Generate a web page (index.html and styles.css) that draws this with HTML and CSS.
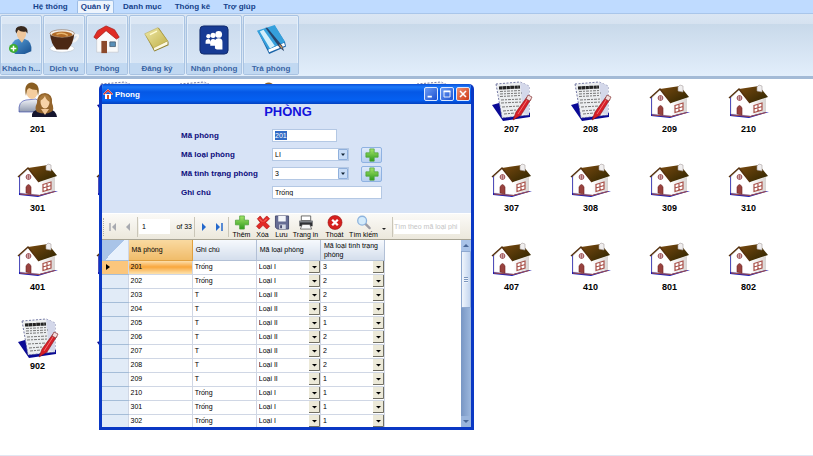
FILE: index.html
```html
<!DOCTYPE html>
<html lang="vi">
<head>
<meta charset="utf-8">
<title>Phong</title>
<link rel="stylesheet" href="styles.css">
</head>
<body>
<svg class="defs" aria-hidden="true">
  <defs>
    <linearGradient id="roof" x1="0" y1="0" x2="1" y2="1"><stop offset="0" stop-color="#7a4a10"/><stop offset="1" stop-color="#2c2400"/></linearGradient>
    <linearGradient id="wall" x1="0" y1="0" x2="1" y2="0"><stop offset="0" stop-color="#fff"/><stop offset="1" stop-color="#d8d4d2"/></linearGradient>
    <linearGradient id="green" x1="0" y1="0" x2="0" y2="1"><stop offset="0" stop-color="#a6e66a"/><stop offset="1" stop-color="#2e9a1c"/></linearGradient>
    <linearGradient id="shirt" x1="0" y1="0" x2="0" y2="1"><stop offset="0" stop-color="#f2f4f8"/><stop offset="1" stop-color="#8e98ae"/></linearGradient>
    <linearGradient id="blue" x1="0" y1="0" x2="1" y2="1"><stop offset="0" stop-color="#5aa0d8"/><stop offset="1" stop-color="#164e8e"/></linearGradient>
    <linearGradient id="gold" x1="0" y1="0" x2="1" y2="1"><stop offset="0" stop-color="#efe9a8"/><stop offset="1" stop-color="#c0b048"/></linearGradient>
  </defs>
  <symbol id="house" viewBox="0 0 40 40">
    <path d="M1 16V35L20 37 40 31 33 31Z" fill="#1c1cb4"/>
    <path d="M2 17 10 9 22 22V35L2 33Z" fill="#fff" stroke="#cfc9cc" stroke-width=".6"/>
    <path d="M21 22 37 17V31L21 35Z" fill="url(#wall)"/>
    <path d="M2 34 21 35.500 37 31.500" fill="none" stroke="#a04a48" stroke-width="1"/>
    <path d="M10 8 30 5 39 16 21 22Z" fill="url(#roof)"/>
    <path d="M0 17 10 8 21 22" fill="none" stroke="#55300c" stroke-width="1.400"/>
    <path d="M28 6 30 4 33 5V11L28 10Z" fill="#f0eeee" stroke="#a8a0a0" stroke-width=".6"/>
    <path d="M8 33V27Q10.500 22 13 27V34Z" fill="#98423e" stroke="#6e2422" stroke-width=".6"/>
    <circle cx="10.500" cy="17" r="2.400" fill="#f2dede" stroke="#984a50" stroke-width="1"/>
    <path d="M8 17H13M10.500 14.500V19.500" stroke="#984a50" stroke-width=".7"/>
    <path d="M25 24.500 33 22V29L25 31.500ZM29 23V30.500M25 28 33 25.500" fill="#fff" stroke="#a85048" stroke-width="1.200"/>
  </symbol>
  <symbol id="note" viewBox="0 0 40 40">
    <path d="M0 24 7 22 38 32V36L11 40Z" fill="#0a0a96"/>
    <path d="M4 3 28 1 37 5V34L10 37Z" fill="#eceef0" stroke="#555a90" stroke-width=".8" stroke-dasharray="2 1.500"/>
    <path d="M28 1 31 32 37 34V5Z" fill="#d4d8ea"/>
    <path d="M7 7 28 6" stroke="#222" stroke-width="3.200" stroke-dasharray="3 .4 4 .5"/>
    <path d="M8 10.500 29 9.500M8 13 30 12M8 15.500 28 14.500M9 19 30 18M9 22 30 21M10 26 28 25M11 30 24 29M12 33 23 32" stroke="#777" stroke-width="1" stroke-dasharray="3 1 2 1"/>
    <path d="M35 16 39 18 29 34 21 39 24 31Z" fill="#d81e28" stroke="#8a1010" stroke-width=".6"/>
    <path d="M36 14 40 16 38 20 34 18Z" fill="#f4dede" stroke="#843030" stroke-width=".7"/>
    <path d="M35 19 26 33" stroke="#f58a88" stroke-width=".8"/>
  </symbol>
  <symbol id="people" viewBox="0 0 40 40">
    <path d="M1 31Q0 20 8 19L18 18Q23 21 22 31Z" fill="url(#shirt)" stroke="#3040a8" stroke-width=".6"/>
    <ellipse cx="14" cy="11" rx="5.500" ry="7" fill="#f4cd9e"/>
    <path d="M8 15Q5 2 14 1.500Q23 3 20 15L19 9Q14 9 11 7L9 9Z" fill="#8a5e22"/>
    <path d="M14 36Q13 29 22 28H31Q38 29 39 36Z" fill="#15152e"/>
    <path d="M19 31Q16 28 19 22Q19 12 27 12Q35 13 34 22Q37 29 33 31Q27 34 19 31Z" fill="#93642c"/>
    <ellipse cx="27" cy="21" rx="4.500" ry="6.500" fill="#f7d3a8"/>
    <path d="M21 20Q22 12 29 14Q33 16 32 21Q28 19 27 15Q25 19 21 20Z" fill="#a9793c"/>
    <path d="M23 28 27 34 31 28Z" fill="#f0c698"/>
  </symbol>
  <symbol id="plus" viewBox="0 0 16 16"><path d="M5.500 1H10.500V5.500H15V10.500H10.500V15H5.500V10.500H1V5.500H5.500Z" fill="url(#green)" stroke="#4aa038" stroke-width=".8"/></symbol>
</svg>

<header class="ribbon">
  <nav class="menu">
    <button>Hệ thống</button>
    <button class="active">Quản lý</button>
    <button>Danh mục</button>
    <button>Thống kê</button>
    <button>Trợ giúp</button>
  </nav>
  <div class="groups">
    <button class="group"><svg viewBox="4 0 32 32"><path d="M10 28Q9 16 17 15H24Q32 17 31 28L24 31H14Z" fill="url(#blue)"/><path d="M17 14H24L21 19Z" fill="#e8c49c"/><ellipse cx="20.500" cy="9" rx="5" ry="6.500" fill="#efc79c"/><path d="M15 9Q12 2 20 1Q28 1 27 9L25 7Q20 8 17 5Z" fill="#38291e"/><circle cx="12" cy="25" r="4.800" fill="#3cae2e"/><path d="M12 22V28M9 25H15" stroke="#fff" stroke-width="1.600"/></svg><span>Khách h...</span></button>
    <button class="group"><svg viewBox="0 0 32 32"><ellipse cx="14" cy="25" rx="13" ry="4" fill="#fff" stroke="#b8c0cc" stroke-width=".6"/><path d="M26 11Q33 9 30 14Q28 18 24 18" fill="none" stroke="#f4f4f4" stroke-width="2.500"/><path d="M1 9Q2 20 8 26H20Q26 20 27 9Z" fill="#4b2814"/><ellipse cx="14" cy="9" rx="13" ry="4" fill="#f3eee8" stroke="#9c8470" stroke-width=".8"/><ellipse cx="14" cy="10" rx="11" ry="3" fill="#b06a26"/><path d="M8 10Q14 7 20 11" stroke="#e7b56e" stroke-width="1.500" fill="none"/></svg><span>Dịch vụ</span></button>
    <button class="group"><svg viewBox="1 0 32 32"><path d="M6 13 17 4 29 13V29H6Z" fill="#fafafa" stroke="#c0c4cc" stroke-width=".7"/><path d="M11 17H17V30H11Z" fill="#8c4a2c"/><path d="M20 18H26V23H20Z" fill="#5a90b8" stroke="#46586a" stroke-width=".8"/><path d="M3 13 7 6 16 1 25 5 30 13 27 15 16 6 6 15Z" fill="#e02c24" stroke="#a81c18" stroke-width=".8"/></svg><span>Phòng</span></button>
    <button class="group wide"><svg viewBox="1 0 34 32"><path d="M5 11 15 29 31 22V18L20 2Z" fill="#8e7e28"/><path d="M14 24 30 17 30 21 15 28Z" fill="#fbf8e2"/><path d="M4 9 19 2 30 17 14 25Z" fill="url(#gold)" stroke="#b6a850" stroke-width=".6"/><path d="M10 10 18 6" stroke="#fffbd0" stroke-width="1.500"/></svg><span>Đăng ký</span></button>
    <button class="group wide"><svg viewBox="0 0 32 32"><rect x="1" y="1" width="30" height="30" rx="4" fill="#173b94" stroke="#0e2869"/><g fill="#fff"><circle cx="10" cy="12" r="2.300"/><circle cx="15" cy="11" r="2.800"/><circle cx="21" cy="10" r="3.600"/><path d="M7 18Q7 15 10 15Q12 15 12 17V20H7ZM12 19Q12 15 15 15Q18 15 18 18V22H12ZM17 25V18Q17 14 21 14Q25 14 25 18V26H19Z"/></g></svg><span>Nhận phòng</span></button>
    <button class="group wide"><svg viewBox="0 0 32 32"><path d="M2 7 14 31 32 23 31 18 20 1Z" fill="#1b64a8"/><path d="M13 26 30 19 31 22 14 29Z" fill="#fff"/><path d="M1 6 20 0 31 18 13 26Z" fill="#35a0dc"/><path d="M4 7 8 5 20 22 15 25Z" fill="#d3effb"/><path d="M10 3 12 3 28 22 30 28 25 24Z" fill="#28456c"/><path d="M25 21 28 25" stroke="#c58a50" stroke-width="1.500"/></svg><span>Trả phòng</span></button>
  </div>
</header>

<main class="desktop">
  <div class="tiles">
    <figure><svg><use href="#people"/></svg><figcaption>201</figcaption></figure>
    <figure><svg><use href="#note"/></svg></figure>
    <figure><svg><use href="#note"/></svg></figure>
    <figure><svg><use href="#people"/></svg></figure>
    <figure><svg><use href="#house"/></svg></figure>
    <figure><svg><use href="#note"/></svg></figure>
    <figure><svg><use href="#note"/></svg><figcaption>207</figcaption></figure>
    <figure><svg><use href="#note"/></svg><figcaption>208</figcaption></figure>
    <figure><svg><use href="#house"/></svg><figcaption>209</figcaption></figure>
    <figure><svg><use href="#house"/></svg><figcaption>210</figcaption></figure>

    <figure><svg><use href="#house"/></svg><figcaption>301</figcaption></figure>
    <figure><svg><use href="#house"/></svg></figure>
    <figure><svg><use href="#house"/></svg></figure>
    <figure><svg><use href="#house"/></svg></figure>
    <figure><svg><use href="#house"/></svg></figure>
    <figure><svg><use href="#house"/></svg></figure>
    <figure><svg><use href="#house"/></svg><figcaption>307</figcaption></figure>
    <figure><svg><use href="#house"/></svg><figcaption>308</figcaption></figure>
    <figure><svg><use href="#house"/></svg><figcaption>309</figcaption></figure>
    <figure><svg><use href="#house"/></svg><figcaption>310</figcaption></figure>

    <figure><svg><use href="#house"/></svg><figcaption>401</figcaption></figure>
    <figure><svg><use href="#house"/></svg></figure>
    <figure><svg><use href="#house"/></svg></figure>
    <figure><svg><use href="#house"/></svg></figure>
    <figure><svg><use href="#house"/></svg></figure>
    <figure><svg><use href="#house"/></svg></figure>
    <figure><svg><use href="#house"/></svg><figcaption>407</figcaption></figure>
    <figure><svg><use href="#house"/></svg><figcaption>410</figcaption></figure>
    <figure><svg><use href="#house"/></svg><figcaption>801</figcaption></figure>
    <figure><svg><use href="#house"/></svg><figcaption>802</figcaption></figure>

    <figure><svg><use href="#note"/></svg><figcaption>902</figcaption></figure>
    <figure><svg><use href="#note"/></svg></figure>
  </div>

  <section class="window">
    <div class="titlebar">
      <svg viewBox="0 0 10 10"><path d="M2 5H8V10H2Z" fill="#fff"/><path d="M0 5 5 0 10 5 9 6 5 2.500 1 6Z" fill="#e8331e" stroke="#fff" stroke-width=".4"/><path d="M4 6H6V10H4Z" fill="#d2502c"/></svg>
      <h1>Phong</h1>
      <button class="ctl" aria-label="Minimize"><svg viewBox="0 0 14 14"><path d="M3 10H8" stroke="#fff" stroke-width="2"/></svg></button>
      <button class="ctl" aria-label="Maximize"><svg viewBox="0 0 14 14"><path d="M3.500 4V10.500H10.500V4Z" fill="none" stroke="#fff"/><path d="M3 4H11" stroke="#fff" stroke-width="2"/></svg></button>
      <button class="ctl close" aria-label="Close"><svg viewBox="0 0 14 14"><path d="M3.500 3.500 10.500 10.500M10.500 3.500 3.500 10.500" stroke="#fff" stroke-width="1.800"/></svg></button>
    </div>

    <form class="form">
      <h2>PHÒNG</h2>
      <div class="fields">
        <label for="room">Mã phòng</label>
        <div class="control"><input id="room" class="short" value="201"></div>
        <label for="type">Mã loại phòng</label>
        <div class="control">
          <select id="type"><option>LI</option></select>
          <button type="button" class="add" aria-label="+"><svg><use href="#plus"/></svg></button>
        </div>
        <label for="state">Mã tình trạng phòng</label>
        <div class="control">
          <select id="state"><option>3</option></select>
          <button type="button" class="add" aria-label="+"><svg><use href="#plus"/></svg></button>
        </div>
        <label for="memo">Ghi chú</label>
        <div class="control"><input id="memo" class="long" value="Trống"></div>
      </div>
    </form>

    <div class="toolbar">
      <i class="grip"></i>
      <button class="nav"><svg viewBox="0 0 10 10"><path d="M2 1V9" stroke="#a8aab0" stroke-width="1.500"/><path d="M8 1V9L4 5Z" fill="#a8aab0"/></svg></button>
      <button class="nav"><svg viewBox="0 0 10 10"><path d="M7 1V9L3 5Z" fill="#a8aab0"/></svg></button>
      <i class="sep"></i>
      <input class="page" aria-label="1" value="1">
      <span class="count">of 33</span>
      <i class="sep"></i>
      <button class="nav"><svg viewBox="0 0 10 10"><path d="M3 1V9L7 5Z" fill="#2468cc"/></svg></button>
      <button class="nav"><svg viewBox="0 0 10 10"><path d="M2 1V9L6 5Z" fill="#2468cc"/><path d="M8 1V9" stroke="#2468cc" stroke-width="1.500"/></svg></button>
      <i class="sep"></i>
      <button class="tool"><svg><use href="#plus"/></svg>Thêm</button>
      <button class="tool slim"><svg viewBox="0 0 16 16"><path d="M2 4 5 1 8 5 12 1 15 4 11 8 15 12 12 15 8 11 4 15 1 12 5 8Z" fill="#e22a26" stroke="#a81414" stroke-width=".7"/><path d="M4 4 7 7M12 4 9 7" stroke="#ff8a80"/></svg>Xóa</button>
      <button class="tool slim"><svg viewBox="0 0 16 16"><path d="M1 1H15V15H3L1 13Z" fill="#666c94" stroke="#484c70"/><path d="M4 1H12V7H4Z" fill="#f4f6fa"/><path d="M5 10H12V15H5Z" fill="#d4d8e4"/><path d="M6 11H8V14H6Z" fill="#484c70"/></svg>Lưu</button>
      <button class="tool wide"><svg viewBox="0 0 16 16"><path d="M3 1H13V6H3Z" fill="#fff" stroke="#555" stroke-width=".9"/><path d="M1 6H15V12H1Z" fill="#2c2e32"/><path d="M1 6H15V8H1Z" fill="#7c8086"/><path d="M4 10H12L14 15H2Z" fill="#f6f6f6" stroke="#555" stroke-width=".8"/></svg>Trang in</button>
      <button class="tool wide"><svg viewBox="0 0 16 16"><circle cx="8" cy="8" r="7.500" fill="#d5201e" stroke="#961010" stroke-width=".6"/><path d="M5 5 11 11M11 5 5 11" stroke="#fff" stroke-width="2.400"/></svg>Thoát</button>
      <button class="tool wide"><svg viewBox="0 0 16 16"><path d="M9 9 14 14" stroke="#9c9ca4" stroke-width="2.500" stroke-linecap="round"/><circle cx="6" cy="6" r="4.700" fill="#d4ebfb" stroke="#8eb4de" stroke-width="1.400"/></svg>Tìm kiếm</button>
      <i class="caret"></i>
      <i class="sep"></i>
      <input class="search" aria-label="Tìm theo mã loại phòng" placeholder="Tìm theo mã loại phi">
    </div>

    <div class="sheet">
      <table>
        <colgroup><col class="c0"><col><col><col><col></colgroup>
        <thead><tr><td class="corner"></td><th class="picked">Mã phòng</th><th>Ghi chú</th><th>Mã loại phòng</th><th>Mã loại tình trạng phòng</th></tr></thead>
        <tbody>
          <tr class="current"><td></td><td>201</td><td>Trống</td><td><select aria-label="Mã loại phòng"><option>Loại I</option></select></td><td><select aria-label="Mã loại tình trạng phòng"><option>3</option></select></td></tr>
          <tr><td></td><td>202</td><td>Trống</td><td><select aria-label="Mã loại phòng"><option>Loại I</option></select></td><td><select aria-label="Mã loại tình trạng phòng"><option>2</option></select></td></tr>
          <tr><td></td><td>203</td><td>T</td><td><select aria-label="Mã loại phòng"><option>Loại II</option></select></td><td><select aria-label="Mã loại tình trạng phòng"><option>2</option></select></td></tr>
          <tr><td></td><td>204</td><td>T</td><td><select aria-label="Mã loại phòng"><option>Loại II</option></select></td><td><select aria-label="Mã loại tình trạng phòng"><option>3</option></select></td></tr>
          <tr><td></td><td>205</td><td>T</td><td><select aria-label="Mã loại phòng"><option>Loại II</option></select></td><td><select aria-label="Mã loại tình trạng phòng"><option>1</option></select></td></tr>
          <tr><td></td><td>206</td><td>T</td><td><select aria-label="Mã loại phòng"><option>Loại II</option></select></td><td><select aria-label="Mã loại tình trạng phòng"><option>2</option></select></td></tr>
          <tr><td></td><td>207</td><td>T</td><td><select aria-label="Mã loại phòng"><option>Loại II</option></select></td><td><select aria-label="Mã loại tình trạng phòng"><option>2</option></select></td></tr>
          <tr><td></td><td>208</td><td>T</td><td><select aria-label="Mã loại phòng"><option>Loại II</option></select></td><td><select aria-label="Mã loại tình trạng phòng"><option>2</option></select></td></tr>
          <tr><td></td><td>209</td><td>T</td><td><select aria-label="Mã loại phòng"><option>Loại II</option></select></td><td><select aria-label="Mã loại tình trạng phòng"><option>1</option></select></td></tr>
          <tr><td></td><td>210</td><td>Trống</td><td><select aria-label="Mã loại phòng"><option>Loại I</option></select></td><td><select aria-label="Mã loại tình trạng phòng"><option>1</option></select></td></tr>
          <tr><td></td><td>301</td><td>Trống</td><td><select aria-label="Mã loại phòng"><option>Loại I</option></select></td><td><select aria-label="Mã loại tình trạng phòng"><option>1</option></select></td></tr>
          <tr><td></td><td>302</td><td>Trống</td><td><select aria-label="Mã loại phòng"><option>Loại I</option></select></td><td><select aria-label="Mã loại tình trạng phòng"><option>1</option></select></td></tr>
        </tbody>
      </table>
      <div class="scroll"><i class="up"></i><i class="thumb"></i><i class="down"></i></div>
    </div>
  </section>
</main>
</body>
</html>
```

FILE: styles.css
```css
* { box-sizing: border-box; }

body {
  margin: 0;
  min-height: 100vh;
  display: flex;
  flex-direction: column;
  overflow: hidden;
  background: #fff;
  border-bottom: 1px solid #e2e6f2;
  font: 8px "Liberation Sans", Arial, sans-serif;
  color: #000;
}

button, input, select { font: inherit; color: inherit; margin: 0; padding: 0; border: 0; background: none; border-radius: 0; }
select { appearance: none; }
.defs { position: absolute; width: 0; height: 0; }

/* Ribbon */
.ribbon { border-bottom: 3px solid #a3bad6; background: #cfdff2; }
.menu { display: flex; gap: 5px; height: 14px; padding-left: 29px; background: #bfdbff; border-bottom: 1px solid #a9c6ea; }
.menu button { padding: 0 4px; color: #15428b; font-weight: bold; line-height: 12px; }
.menu .active { background: #edf4fd; border: 1px solid #9dbde6; border-bottom: 0; border-radius: 2px 2px 0 0; padding: 0 3px; }
.groups { display: flex; gap: 1px; height: 62px; padding: 1px 0; background: linear-gradient(#dbe6f3 0, #d6e2f0 10px, #c8d9ea 10px, #e2eefb); }
.group {
  display: flex; flex-direction: column; align-items: center; justify-content: space-between;
  width: 42px; padding-top: 8px;
  border: 1px solid #a9c3e2; border-radius: 2px;
  background: linear-gradient(#dce7f4 0 8px, #ccdcee 8px, #dbe8f7);
  box-shadow: inset 0 0 0 1px #e4effa;
  color: #3a64a4; font-weight: bold;
}
.group.wide { width: 56px; }
.group svg { width: 30px; height: 32px; }
.group span { width: 100%; background: #c1d8f1; line-height: 11px; text-align: center; white-space: nowrap; }

/* Room tiles */
.desktop { position: relative; flex: 1; }
.tiles { display: grid; grid-template-columns: repeat(10, 75px); grid-auto-rows: 75px; gap: 4px; padding-top: 2px; }
figure { margin: 0; display: flex; flex-direction: column; align-items: center; gap: 3px; }
figure svg { width: 42px; height: 40px; }
figcaption { font-size: 9px; font-weight: bold; line-height: 11px; }

/* Window */
.window {
  position: absolute; left: 99px; top: 5px; width: 375px;
  border: 3px solid #0a38c4; border-top: 0; border-radius: 5px 5px 0 0;
  background: #d7e3f6; overflow: hidden;
}
.titlebar {
  display: flex; align-items: center; gap: 2px; height: 20px; margin: 0 -3px; padding: 0 4px;
  background: linear-gradient(#0a4fd8, #1c78f8 3px, #0558e6 8px, #0560f2 16px, #0340c0);
  color: #fff;
}
.titlebar > svg { width: 10px; height: 10px; }
.titlebar h1 { flex: 1; margin: 0; font-size: 8px; }
.ctl { width: 14px; height: 14px; border: 1px solid #dce8ff; border-radius: 2px; background: linear-gradient(135deg, #6c9cf4, #1c50d0); display: flex; }
.ctl.close { background: linear-gradient(135deg, #f09070, #cc3814); }
.ctl svg { width: 100%; height: 100%; }

.form { padding: 0 0 11px 79px; }
.form h2 { margin: 0 76px 0 0; font-size: 13px; line-height: 16px; height: 22px; text-align: center; color: #1212dc; }
.fields { display: grid; grid-template-columns: 91px 1fr; grid-auto-rows: 19px; align-items: center; }
.fields label { color: #0c0c7c; font-weight: bold; }
.control { display: flex; align-items: center; gap: 12px; font-size: 7px; }
.control input, .control select { height: 13px; border: 1px solid #b4c8e4; background: #fff; padding: 0 2px; }
.control .short { width: 65px; background: linear-gradient(#316ac5, #316ac5) 2px 1px / 12px 9px no-repeat #fff; color: #fff; }
.control .long { width: 110px; }
.control select {
  width: 77px;
  background:
    url("data:image/svg+xml,%3Csvg xmlns='http://www.w3.org/2000/svg' viewBox='0 0 10 11'%3E%3Cpath d='M.5.5H9.500V10.500H.5Z' fill='%23c8dcf6' stroke='%2390b0dc'/%3E%3Cpath d='M3 4.500H7L5 7Z' fill='%23123'/%3E%3C/svg%3E") right center / 10px 11px no-repeat #fff;
}
.add { width: 21px; height: 16px; border: 1px solid #8fb2e2; border-radius: 2px; background: linear-gradient(#dfeafa, #b9d0f0); display: grid; place-items: center; }
.add svg { width: 16px; height: 14px; }

/* Record toolbar */
.toolbar { display: flex; align-items: center; height: 27px; border-top: 1px solid #fff; border-bottom: 1px solid #a8a494; background: linear-gradient(#fbfaf7, #ece8dc); white-space: nowrap; font-size: 7px; }
.grip { width: 1px; height: 18px; margin: 0 1px; border-left: 1px dotted #b0ac9c; }
.nav { width: 15px; display: grid; place-items: center; }
.nav svg { width: 10px; height: 10px; }
.sep { width: 1px; height: 20px; background: #cac6b8; margin: 0 1px 0 2px; }
.page { width: 31px; height: 15px; background: #fff; padding: 0 3px; }
.count { width: 22px; text-align: right; }
.tool { width: 23px; display: flex; flex-direction: column; align-items: center; line-height: 9px; }
.tool svg { width: 16px; height: 15px; }
.tool.slim { width: 19px; }
.tool.wide { width: 29px; }
.caret { border: 2px solid transparent; border-top-color: #222; margin: 6px 4px 0; }
.search { flex: 1; min-width: 0; height: 14px; margin-right: 11px; background: #fff; padding: 0; }
.search::placeholder { color: #c4c4c4; }

/* Grid */
.sheet { display: flex; justify-content: space-between; height: 187px; overflow: hidden; background: #fff; }
table { width: 283px; border-collapse: collapse; table-layout: fixed; align-self: flex-start; font-size: 7px; }
.c0 { width: 26px; }
th { height: 20px; padding: 0 3px; text-align: left; font-weight: normal; line-height: 9px; border: 1px solid #b2c0d6; border-top: 0; background: linear-gradient(#f6f9fd, #d4deec); }
.picked { background: linear-gradient(#f9d9a0, #f0bc6a); border-color: #e0a040; }
td { height: 14px; padding: 0 0 0 2px; border: 1px solid #d0d7e5; line-height: 10px; }
td:first-child { background-color: #e1ebf7; border-left: 0; border-bottom-color: #a5bdd8; }
thead td.corner { background: linear-gradient(135deg, #a9c4e8 50%, #e8f1fc 50%); border-top: 0; }
td select {
  display: block; width: 100%; height: 12px;
  background:
    url("data:image/svg+xml,%3Csvg xmlns='http://www.w3.org/2000/svg' viewBox='0 0 11 12'%3E%3Cpath d='M0 0H11V12H0Z' fill='%23ece9d8'/%3E%3Cpath d='M10.500 0V11.500H0' fill='none' stroke='%23716f64'/%3E%3Cpath d='M3 5H8L5.500 7.500Z'/%3E%3C/svg%3E") right center / 11px 12px no-repeat;
}
.current td:nth-child(2) { background: linear-gradient(#fde3b4, #f9a63c 50%, #fde0a8); }
.current td:first-child {
  background: url("data:image/svg+xml,%3Csvg xmlns='http://www.w3.org/2000/svg' viewBox='0 0 4 6'%3E%3Cpath d='M0 0 4 3 0 6Z'/%3E%3C/svg%3E") 4px center / 4px 6px no-repeat #fbc67c;
}
.scroll { width: 10px; display: flex; flex-direction: column; align-items: center; background: linear-gradient(90deg, #7896c4, #9db8de); }
.scroll .up, .scroll .down { width: 10px; height: 11px; background: #a9c3e8; display: grid; place-items: center; }
.scroll .up::after { content: ""; border: 3px solid transparent; border-bottom-color: #4a6898; margin-top: -3px; }
.scroll .down { margin-top: auto; background: #9ab5dc; }
.scroll .down::after { content: ""; border: 3px solid transparent; border-top-color: #4a6898; margin-bottom: -3px; }
.scroll .thumb { width: 10px; height: 57px; border: 1px solid #8ea8d0; border-radius: 1px; background: repeating-linear-gradient(#7a94bc 0 1px, #eef4fc 1px 2px) center / 4px 6px no-repeat, linear-gradient(90deg, #f0f5fc, #c4d6f0); }
```
